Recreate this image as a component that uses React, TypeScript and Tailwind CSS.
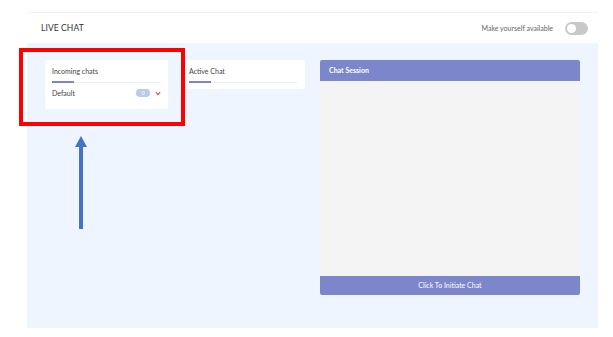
import React from 'react';

const font = { fontFamily: 'Lato, "Open Sans", sans-serif' };

// Small card with a tab title and underline
const TabCard: React.FC<{ title: string; className?: string; children?: React.ReactNode }> = ({ title, className, children }) => {
  return (
    <div className={`bg-white rounded-[2px] px-[7px] pt-[6px] ${className ?? ''}`}>
      <div className="text-[7px] leading-[10px] text-[#444]">{title}</div>
      <div className="relative mt-[5px] h-[2px]">
        <div className="absolute left-0 right-0 top-[0.5px] h-[1px] bg-[#eeeeee]" />
        <div className="absolute left-0 top-0 h-[2px] w-[22px] bg-[#7b86cb]" />
      </div>
      {children}
    </div>
  );
};

export default function App() {
  return (
    <div className="relative w-[613px] h-[337px] bg-white" style={font}>
      <div className="pt-[12px] pl-[27px] pr-[15px]">
        {/* Header */}
        <div className="h-[31px] border-t border-[#f1f2f4] bg-white flex items-center justify-between pl-[14px] pr-[10px]">
          <span className="text-[8.5px] tracking-[0.1px] text-[#333]">LIVE CHAT</span>
          <div className="flex items-center gap-[12px]">
            <span className="text-[7px] text-[#666]">Make yourself available</span>
            <div className="w-[23px] h-[13px] rounded-full bg-[#c8c8c8] flex items-center px-[2px]">
              <div className="w-[9px] h-[9px] rounded-full bg-white" />
            </div>
          </div>
        </div>

        {/* Body */}
        <div className="h-[285px] bg-[#eef5fe] flex items-start pt-[17px] pl-[18px]">
          <TabCard title="Incoming chats" className="w-[123px] h-[49px]">
            <div className="mt-[5px] flex items-center justify-between">
              <span className="text-[7px] text-[#444]">Default</span>
              <div className="flex items-center gap-[5px]">
                <span className="w-[14px] h-[8px] rounded-full bg-[#b7cbea] text-white text-[5.5px] leading-[8px] text-center">0</span>
                <svg width="6" height="5" viewBox="0 0 6 5" fill="none" stroke="#e0494f" strokeWidth="1.1">
                  <path d="M0.8 1.2 L3 3.6 L5.2 1.2" />
                </svg>
              </div>
            </div>
          </TabCard>

          <TabCard title="Active Chat" className="ml-[13px] w-[124px] h-[29px] px-[8px]" />

          {/* Chat session panel */}
          <div className="ml-[15px] w-[260px] flex flex-col">
            <div className="h-[21px] bg-[#7b86cb] rounded-t-[2px] flex items-center pl-[9px] text-[7px] font-bold text-white">
              Chat Session
            </div>
            <div className="h-[195px] bg-[#f4f4f4]" />
            <div className="h-[19px] bg-[#7b86cb] rounded-b-[2px] flex items-center justify-center text-[7px] text-white">
              Click To Initiate Chat
            </div>
          </div>
        </div>
      </div>

      {/* Annotation: red highlight box */}
      <div className="absolute left-[19px] top-[48px] w-[166px] h-[78px] border-[4px] border-[#ff0000]" />

      {/* Annotation: blue arrow */}
      <svg className="absolute left-[72px] top-[134px]" width="18" height="98" viewBox="0 0 18 98">
        <path d="M9 2 L15 13 L3 13 Z" fill="#4472c4" />
        <rect x="7" y="12" width="4" height="83" fill="#4472c4" />
      </svg>
    </div>
  );
}
